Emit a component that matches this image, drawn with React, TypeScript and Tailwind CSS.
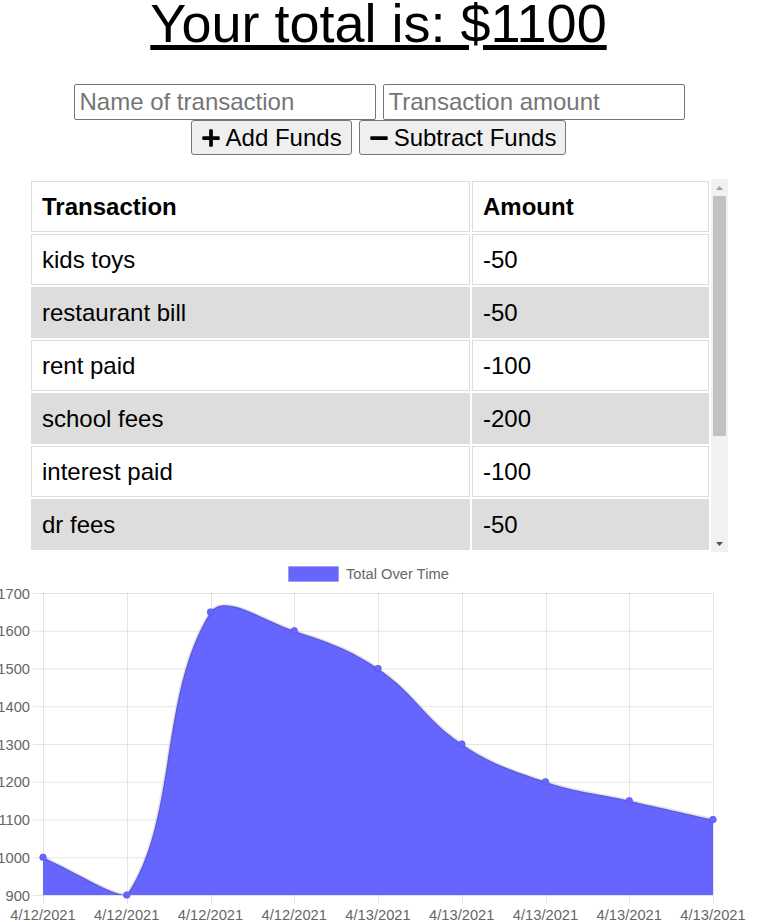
import { FaPlus, FaMinus } from 'react-icons/fa';

type Pt = { x: number; y: number };

const ROWS: [string, string][] = [
  ['kids toys', '-50'],
  ['restaurant bill', '-50'],
  ['rent paid', '-100'],
  ['school fees', '-200'],
  ['interest paid', '-100'],
  ['dr fees', '-50'],
  ['salary', '750'],
  ['groceries', '-100'],
];

const VALUES = [1000, 900, 1650, 1600, 1500, 1300, 1200, 1150, 1100];
const LABELS = ['4/12/2021', '4/12/2021', '4/12/2021', '4/12/2021', '4/13/2021', '4/13/2021', '4/13/2021', '4/13/2021', '4/13/2021'];

// chart area in page coords
const LEFT = 43, RIGHT = 713, TOP = 593, BOTTOM = 895;

const clamp = (v: number, a: number, b: number) => Math.max(a, Math.min(b, v));

function curvePath(points: Pt[]) {
  const t = 0.4;
  const ctrl = points.map((cur, i) => {
    const prev = points[i - 1] ?? cur;
    const next = points[i + 1] ?? cur;
    const d01 = Math.hypot(cur.x - prev.x, cur.y - prev.y);
    const d12 = Math.hypot(next.x - cur.x, next.y - cur.y);
    const s01 = d01 + d12 ? d01 / (d01 + d12) : 0;
    const s12 = d01 + d12 ? d12 / (d01 + d12) : 0;
    const fa = t * s01, fb = t * s12;
    const cap = (p: Pt) => ({ x: clamp(p.x, LEFT, RIGHT), y: clamp(p.y, TOP, BOTTOM) });
    return {
      prev: cap({ x: cur.x - fa * (next.x - prev.x), y: cur.y - fa * (next.y - prev.y) }),
      next: cap({ x: cur.x + fb * (next.x - prev.x), y: cur.y + fb * (next.y - prev.y) }),
    };
  });
  let d = `M${points[0].x} ${points[0].y}`;
  for (let i = 0; i < points.length - 1; i++) {
    const a = ctrl[i].next, b = ctrl[i + 1].prev, p = points[i + 1];
    d += ` C${a.x} ${a.y} ${b.x} ${b.y} ${p.x} ${p.y}`;
  }
  return d;
}

function Chart() {
  const step = (RIGHT - LEFT) / 8;
  const pts = VALUES.map((v, i) => ({ x: LEFT + i * step, y: BOTTOM - ((v - 900) * (BOTTOM - TOP)) / 800 }));
  const line = curvePath(pts);
  const ticks = [1700, 1600, 1500, 1400, 1300, 1200, 1100, 1000, 900];
  const grid = 'rgba(0,0,0,0.1)';

  return (
    <svg width={757} height={370} viewBox="0 552 757 370" className="block" fontFamily="'Liberation Sans', Arial, sans-serif">
      <defs>
        <clipPath id="area">
          <rect x={LEFT - 1.5} y={TOP - 1.5} width={RIGHT - LEFT + 3} height={BOTTOM - TOP + 3} />
        </clipPath>
      </defs>

      {/* legend */}
      <rect x={288.5} y={566.5} width={50} height={15} fill="#6666ff" stroke={grid} />
      <text x={346} y={578.5} fontSize={14.7} fill="#666">Total Over Time</text>

      {/* horizontal grid + y labels */}
      {ticks.map(v => {
        const y = BOTTOM - ((v - 900) * (BOTTOM - TOP)) / 800;
        return (
          <g key={v}>
            <line x1={33} x2={RIGHT} y1={y + 0.5} y2={y + 0.5} stroke={grid} />
            <text x={30} y={y + 5.5} fontSize={14.7} fill="#666" textAnchor="end">{v}</text>
          </g>
        );
      })}

      {/* vertical grid + x labels */}
      {pts.map((p, i) => (
        <g key={i}>
          <line x1={Math.round(p.x) + 0.5} x2={Math.round(p.x) + 0.5} y1={TOP} y2={BOTTOM + 9} stroke={grid} />
          <text x={p.x} y={920} fontSize={14.7} fill="#666" textAnchor="middle">{LABELS[i]}</text>
        </g>
      ))}

      <g clipPath="url(#area)">
        <path d={`${line} L${RIGHT} ${BOTTOM} L${LEFT} ${BOTTOM} Z`} fill="#6666ff" />
        <path d={line} fill="none" stroke={grid} strokeWidth={3} />
      </g>

      {pts.map((p, i) => (
        <circle key={i} cx={p.x} cy={p.y} r={3.5} fill="#6666ff" stroke={grid} />
      ))}
    </svg>
  );
}

function Scrollbar() {
  return (
    <div className="w-[17px] bg-[#f1f1f1] flex flex-col">
      <div className="h-[17px] flex items-center justify-center">
        <svg width="7" height="4" viewBox="0 0 7 4"><path d="M3.5 0 L7 4 L0 4 Z" fill="#a3a3a3" /></svg>
      </div>
      <div className="h-[240px] mx-[2px] bg-[#c1c1c1]" />
      <div className="flex-1" />
      <div className="h-[17px] flex items-center justify-center">
        <svg width="7" height="4" viewBox="0 0 7 4"><path d="M0 0 L7 0 L3.5 4 Z" fill="#505050" /></svg>
      </div>
    </div>
  );
}

export default function App() {
  return (
    <div className="w-[757px] h-[922px] overflow-hidden bg-white text-black font-['Liberation_Sans',Arial,sans-serif]">
      <h1 className="text-center text-[54px] leading-[46px] font-normal underline">Your total is: $1100</h1>

      <div className="mt-[38px] flex justify-center gap-[7px] pl-[1px]">
        <input
          placeholder="Name of transaction"
          className="w-[302px] h-[36px] px-[5px] text-[24px] border border-[#767676] rounded-[2px] placeholder:text-[#757575] outline-none"
        />
        <input
          placeholder="Transaction amount"
          className="w-[302px] h-[36px] px-[5px] text-[24px] border border-[#767676] rounded-[2px] placeholder:text-[#757575] outline-none"
        />
      </div>
      <div className="flex justify-center gap-[7px]">
        <button className="h-[35px] px-[9px] inline-flex items-center gap-[5px] text-[24px] bg-[#efefef] border border-[#767676] rounded-[3px]">
          <FaPlus size={20} /> Add Funds
        </button>
        <button className="h-[35px] px-[9px] inline-flex items-center gap-[5px] text-[24px] bg-[#efefef] border border-[#767676] rounded-[3px]">
          <FaMinus size={20} /> Subtract Funds
        </button>
      </div>

      <div className="mt-[24px] ml-[29px] w-[699px] h-[373px] flex">
        <div className="w-[682px] overflow-hidden">
          <table className="w-[682px] table-fixed border-separate border-spacing-[2px] text-[24px]">
            <colgroup>
              <col className="w-[439px]" />
              <col className="w-[237px]" />
            </colgroup>
            <thead>
              <tr>
                <th className="h-[51px] px-[10px] py-0 text-left font-bold border border-[#ddd]">Transaction</th>
                <th className="h-[51px] px-[10px] py-0 text-left font-bold border border-[#ddd]">Amount</th>
              </tr>
            </thead>
            <tbody>
              {ROWS.map(([name, amt], i) => (
                <tr key={i} className={i % 2 === 1 ? 'bg-[#ddd]' : 'bg-white'}>
                  <td className="h-[51px] px-[10px] py-0 border border-[#ddd]">{name}</td>
                  <td className="h-[51px] px-[10px] py-0 border border-[#ddd]">{amt}</td>
                </tr>
              ))}
            </tbody>
          </table>
        </div>
        <Scrollbar />
      </div>

      <Chart />
    </div>
  );
}
